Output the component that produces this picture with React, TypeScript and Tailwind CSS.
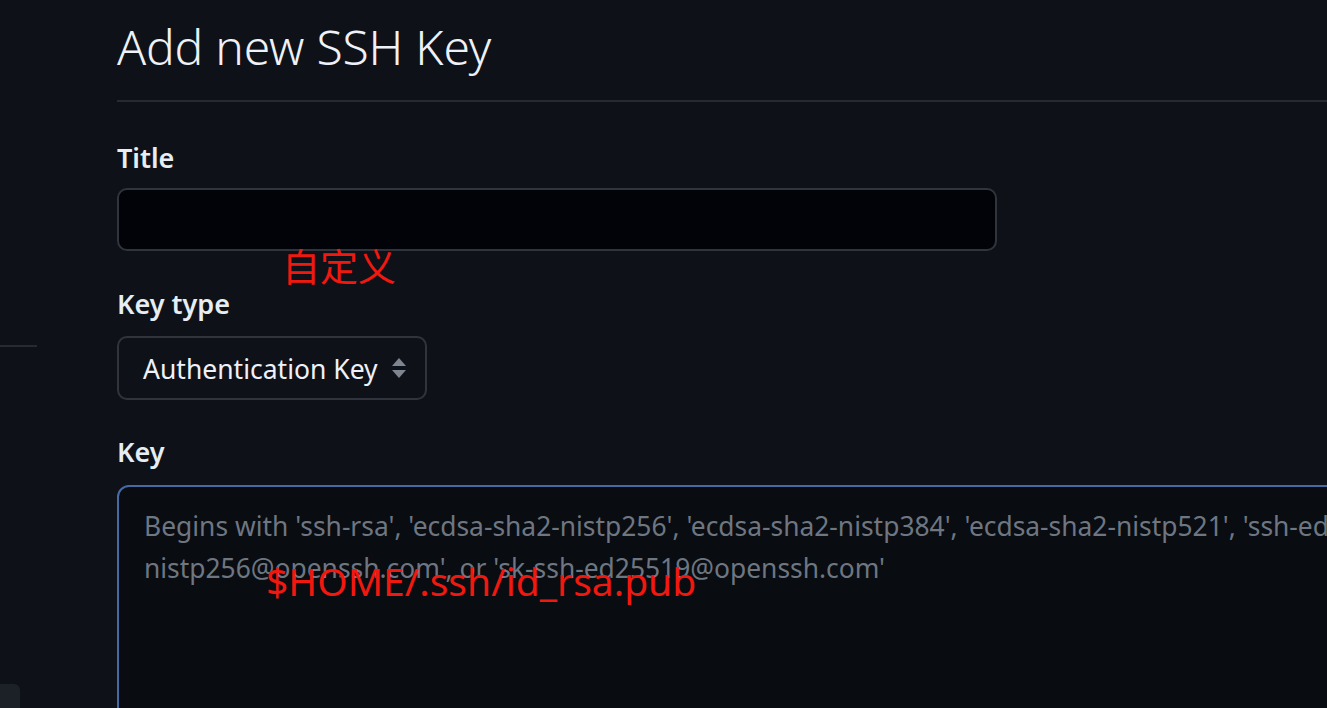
import React from 'react';

const SelectArrows = () => (
  <svg width="16" height="22" viewBox="0 0 16 22" className="shrink-0">
    <path d="M8 1 L15 9 L1 9 Z" fill="#7d8590" />
    <path d="M1 13 L15 13 L8 21 Z" fill="#7d8590" />
  </svg>
);

const App = () => {
  return (
    <div
      className="flex h-[708px] w-full overflow-hidden bg-[#0e1118] text-[#e6edf3]"
      style={{ fontFamily: '"Noto Sans", "Open Sans", sans-serif' }}
    >
      {/* left sidebar remnants */}
      <div className="flex w-[37px] shrink-0 flex-col">
        <div className="mt-[345px] h-[2px] w-full shrink-0 bg-[#262a31]" />
        <div className="mt-[337px] h-[30px] w-[20px] shrink-0 rounded-r-md bg-[#1c2027]" />
      </div>

      <main className="relative ml-[80px] flex min-w-0 flex-1 flex-col">
        <div className="shrink-0 border-b-2 border-[#262a31] pb-[22px] pt-[16px]">
          <h1 className="text-[48px] font-light leading-[62px] tracking-[-0.2px] text-[#eef1f7]">
            Add new SSH Key
          </h1>
        </div>

        <label className="mt-[38px] shrink-0 text-[27px] font-semibold leading-[36px]">Title</label>
        <div className="mt-[12px] h-[63px] w-[880px] shrink-0 rounded-[10px] border-2 border-[#30353d] bg-[#010308]" />

        <label className="mt-[35px] shrink-0 text-[27px] font-semibold leading-[36px]">Key type</label>
        <div className="mt-[14px] flex h-[64px] w-[310px] shrink-0 items-center justify-between rounded-[10px] border-2 border-[#30353d] pl-[24px] pr-[18px]">
          <span className="pt-[3px] text-[26.5px] leading-none text-[#eef1f7]">Authentication Key</span>
          <SelectArrows />
        </div>

        <label className="mt-[34px] shrink-0 text-[27px] font-semibold leading-[36px]">Key</label>
        <div className="mt-[15px] h-[300px] w-[1400px] shrink-0 rounded-tl-[12px] border-2 border-[#456aa6] bg-[#090c11] px-[25px] pt-[18px]">
          <p className="whitespace-nowrap text-[26.4px] leading-[42px] text-[#6e7681]">
            Begins with 'ssh-rsa', 'ecdsa-sha2-nistp256', 'ecdsa-sha2-nistp384', 'ecdsa-sha2-nistp521', 'ssh-ed25519', 'sk-ecdsa-sha2-
          </p>
          <p className="whitespace-nowrap text-[26.4px] leading-[42px] text-[#6e7681]">
            nistp256@openssh.com', or 'sk-ssh-ed25519@openssh.com'
          </p>
        </div>

        {/* red annotations */}
        <span
          className="absolute left-[165px] top-[246px] text-[38px] leading-none text-[#f0180f]"
          style={{ fontFamily: '"Noto Sans CJK SC", sans-serif' }}
        >
          自定义
        </span>
        <span
          className="absolute left-[149px] top-[561px] text-[39px] leading-none text-[#f0180f]"
          style={{ fontFamily: '"Noto Sans", "Noto Sans CJK SC", sans-serif' }}
        >
          $HOME/.ssh/id_rsa.pub
        </span>
      </main>
    </div>
  );
};

export default App;
